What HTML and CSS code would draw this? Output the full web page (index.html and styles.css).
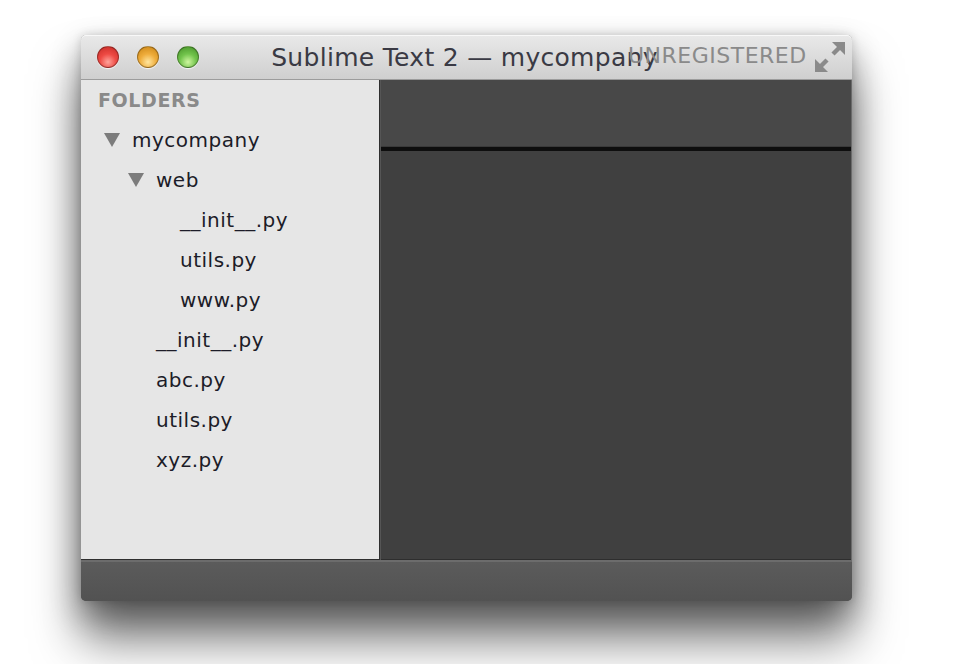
FILE: index.html
```html
<!DOCTYPE html>
<html>
<head>
<meta charset="utf-8">
<link rel="stylesheet" href="styles.css">
</head>
<body>
<div class="window">
  <div class="titlebar">
    <div class="lights">
      <span class="light red"></span>
      <span class="light yellow"></span>
      <span class="light green"></span>
    </div>
    <div class="title">Sublime Text 2 — mycompany</div>
    <div class="unreg">UNREGISTERED</div>
    <svg class="fullscreen" width="30" height="30" viewBox="0 0 30 30">
      <g fill="#8a8a8a" stroke="#8a8a8a">
        <polygon points="30,0 17,0 30,13" stroke="none"/>
        <line x1="26" y1="4" x2="18" y2="12" stroke-width="4.5"/>
        <polygon points="0,30 13,30 0,17" stroke="none"/>
        <line x1="4" y1="26" x2="12" y2="18" stroke-width="4.5"/>
      </g>
    </svg>
  </div>
  <div class="main">
    <div class="sidebar">
      <div class="heading">FOLDERS</div>
      <div class="row folder l0"><span class="tri"></span><span>mycompany</span></div>
      <div class="row folder l1"><span class="tri"></span><span>web</span></div>
      <div class="row file l2">__init__.py</div>
      <div class="row file l2">utils.py</div>
      <div class="row file l2">www.py</div>
      <div class="row file l1">__init__.py</div>
      <div class="row file l1">abc.py</div>
      <div class="row file l1">utils.py</div>
      <div class="row file l1">xyz.py</div>
    </div>
    <div class="editor">
      <div class="tabs"></div>
      <div class="tabline"></div>
      <div class="code"></div>
    </div>
  </div>
  <div class="statusbar"></div>
</div>
</body>
</html>
```

FILE: styles.css
```css
html, body {
  margin: 0;
  padding: 0;
  background: #ffffff;
  width: 958px;
  height: 664px;
  overflow: hidden;
}

.window {
  margin: 35px 0 0 81px;
  width: 771px;
  height: 566px;
  display: flex;
  flex-direction: column;
  border-radius: 5px;
  box-shadow: 0 38px 48px rgba(0,0,0,0.55), 0 12px 30px rgba(0,0,0,0.3), 0 0 10px rgba(0,0,0,0.15);
  background: #555;
  font-family: "DejaVu Sans", "Liberation Sans", sans-serif;
}

.titlebar {
  position: relative;
  height: 44px;
  flex: none;
  background: linear-gradient(#e9e9e9, #cfcfcf);
  border-bottom: 1px solid #9c9c9c;
  border-radius: 5px 5px 0 0;
  box-shadow: inset 0 1px 0 #f8f8f8;
  display: flex;
  align-items: center;
  justify-content: center;
}

.lights {
  position: absolute;
  left: 16px;
  top: 11px;
  display: flex;
  gap: 18px;
}

.light {
  width: 22px;
  height: 22px;
  border-radius: 50%;
  box-sizing: border-box;
  border: 1px solid rgba(0,0,0,0.3);
  box-shadow: 0 1px 1px rgba(255,255,255,0.8);
}
.red { background: radial-gradient(circle at 50% 75%, #ffa49c 0%, #ee4a44 45%, #c42a25 100%); }
.yellow { background: radial-gradient(circle at 50% 75%, #ffe6a0 0%, #efad3c 45%, #c98312 100%); }
.green { background: radial-gradient(circle at 50% 75%, #cff7a0 0%, #72c44c 45%, #449026 100%); }

.title {
  font-size: 25px;
  color: #3a3a44;
  letter-spacing: 0.3px;
  margin-top: 1px;
  margin-left: -4px;
}

.unreg {
  position: absolute;
  left: 547px;
  top: 8px;
  font-size: 22px;
  color: #8a8a8a;
  letter-spacing: 0.5px;
}

.fullscreen {
  position: absolute;
  left: 734px;
  top: 7px;
}

.main {
  flex: 1;
  display: flex;
  min-height: 0;
}

.sidebar {
  width: 298px;
  flex: none;
  background: #e6e6e6;
  border-right: 1px solid #2e2e2e;
  border-bottom: 1px solid #2e2e2e;
}

.heading {
  height: 40px;
  line-height: 40px;
  padding-left: 17px;
  font-size: 19px;
  font-weight: bold;
  color: #8a8a8a;
  letter-spacing: 0.6px;
}

.row {
  height: 40px;
  display: flex;
  align-items: center;
  font-size: 20px;
  color: #1c1c28;
  letter-spacing: 0.5px;
}

.folder { gap: 12px; }
.folder.l0 { padding-left: 23px; }
.folder.l1 { padding-left: 47px; }
.file.l1 { padding-left: 75px; }
.file.l2 { padding-left: 99px; }

.tri {
  width: 0;
  height: 0;
  border-left: 8px solid transparent;
  border-right: 8px solid transparent;
  border-top: 14px solid #7c7c7c;
}

.editor {
  flex: 1;
  display: flex;
  flex-direction: column;
  border-left: 1px solid #555;
  border-right: 1px solid #6a6a6a;
  background: #404040;
}

.tabs {
  height: 66px;
  flex: none;
  background: #484848;
  border-bottom: 1px solid #3a3a3a;
}

.tabline {
  height: 4px;
  flex: none;
  background: #0e0e0e;
}

.code {
  flex: 1;
  background: #404040;
  border-bottom: 1px solid #2e2e2e;
}

.statusbar {
  height: 39px;
  flex: none;
  background: linear-gradient(#5b5b5b, #525252);
  border-top: 2px solid #6c6c6c;
  border-radius: 0 0 5px 5px;
}
```
